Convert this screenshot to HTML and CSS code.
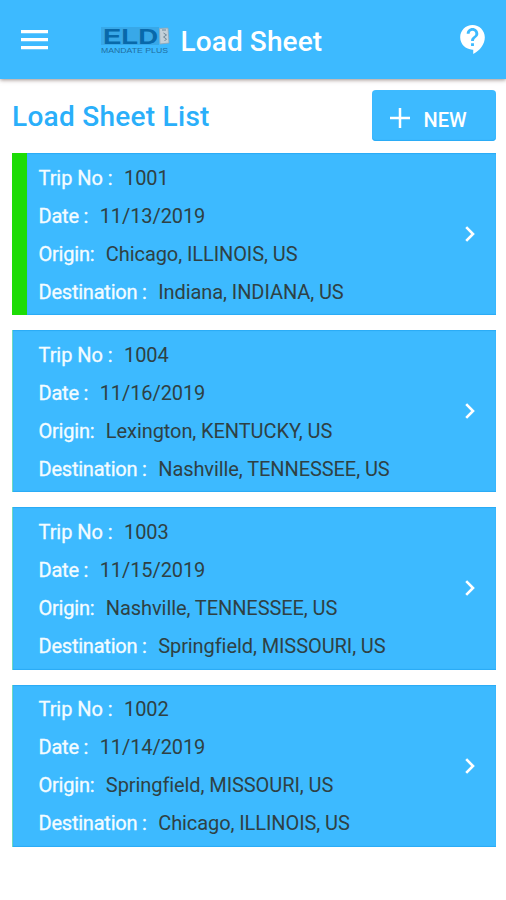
FILE: index.html
```html
<!DOCTYPE html>
<html lang="en">
<head>
<meta charset="utf-8">
<title>Load Sheet</title>
<link rel="stylesheet" href="styles.css">
</head>
<body>
<header class="bar">
  <svg class="menu" viewBox="0 0 27 20"><path d="M0 0h27v3.2H0zM0 8h27v3.2H0zM0 16h27v3.2H0z"/></svg>
  <svg class="logo" viewBox="0 0 69 28">
    <path fill="#38a8e8" d="M0 0h58v18H0z"/>
    <text class="logo-name" x="2" y="17" textLength="55" lengthAdjust="spacingAndGlyphs">ELD</text>
    <path fill="#c3d0d8" stroke="#8fa6b5" stroke-width=".8" d="M58.500 1.500l8.500-.5 1 15-9 1z"/>
    <path fill="none" stroke="#6d8798" d="M61 3h4M62.500 6l3 2-3 2 3 2-2 2"/>
    <text class="logo-sub" x="0" y="26" textLength="67" lengthAdjust="spacingAndGlyphs">MANDATE PLUS</text>
  </svg>
  <h1 class="title">Load Sheet</h1>
  <svg class="help" viewBox="3 2 17 20"><path d="M11.5 2C6.81 2 3 5.81 3 10.5S6.81 19 11.5 19h.5v3c4.86-2.34 8-7 8-11.5C20 5.81 16.190 2 11.5 2zm1 14.5h-2v-2h2v2zm0-3.5h-2c0-3.250 3-3 3-5 0-1.100-.9-2-2-2s-2 .9-2 2h-2c0-2.210 1.790-4 4-4s4 1.790 4 4c0 2.500-3 2.750-3 5z"/></svg>
</header>
<main class="content">
  <div class="heading">
    <h2 class="subtitle">Load Sheet List</h2>
    <button class="new"><svg class="plus" viewBox="0 0 20 20"><path d="M10 0v20M0 10h20"/></svg><span>NEW</span></button>
  </div>
  <section class="list">
    <article class="card active">
      <dl class="rows">
        <div class="row"><dt class="trip">Trip No :</dt><dd>1001</dd></div>
        <div class="row"><dt>Date :</dt><dd>11/13/2019</dd></div>
        <div class="row"><dt>Origin:</dt><dd>Chicago, ILLINOIS, US</dd></div>
        <div class="row"><dt>Destination :</dt><dd>Indiana, INDIANA, US</dd></div>
      </dl>
      <svg class="chevron" viewBox="0 0 10 16"><path d="M1.200 1.200L8 8l-6.800 6.800"/></svg>
    </article>
    <article class="card">
      <dl class="rows">
        <div class="row"><dt class="trip">Trip No :</dt><dd>1004</dd></div>
        <div class="row"><dt>Date :</dt><dd>11/16/2019</dd></div>
        <div class="row"><dt>Origin:</dt><dd>Lexington, KENTUCKY, US</dd></div>
        <div class="row"><dt>Destination :</dt><dd>Nashville, TENNESSEE, US</dd></div>
      </dl>
      <svg class="chevron" viewBox="0 0 10 16"><path d="M1.200 1.200L8 8l-6.800 6.800"/></svg>
    </article>
    <article class="card">
      <dl class="rows">
        <div class="row"><dt class="trip">Trip No :</dt><dd>1003</dd></div>
        <div class="row"><dt>Date :</dt><dd>11/15/2019</dd></div>
        <div class="row"><dt>Origin:</dt><dd>Nashville, TENNESSEE, US</dd></div>
        <div class="row"><dt>Destination :</dt><dd>Springfield, MISSOURI, US</dd></div>
      </dl>
      <svg class="chevron" viewBox="0 0 10 16"><path d="M1.200 1.200L8 8l-6.800 6.800"/></svg>
    </article>
    <article class="card">
      <dl class="rows">
        <div class="row"><dt class="trip">Trip No :</dt><dd>1002</dd></div>
        <div class="row"><dt>Date :</dt><dd>11/14/2019</dd></div>
        <div class="row"><dt>Origin:</dt><dd>Springfield, MISSOURI, US</dd></div>
        <div class="row"><dt>Destination :</dt><dd>Chicago, ILLINOIS, US</dd></div>
      </dl>
      <svg class="chevron" viewBox="0 0 10 16"><path d="M1.200 1.200L8 8l-6.800 6.800"/></svg>
    </article>
  </section>
</main>
</body>
</html>
```
FILE: styles.css
```css
* { box-sizing: border-box; }
body { margin: 0; background: #fff; font-family: Roboto, "Liberation Sans", sans-serif; }
h1, h2, dl, dd { margin: 0; }
svg { display: block; flex: none; }

.bar {
  display: flex;
  align-items: center;
  height: 79px;
  padding: 0 21px;
  background: #3dbaff;
  box-shadow: 0 1px 4px rgba(60, 30, 20, .5);
}
.menu { width: 27px; height: 20px; fill: #fff; }
.logo { width: 69px; height: 28px; margin: 2px 0 0 53px; }
.logo-name { font: 700 21.500px "Liberation Sans", sans-serif; fill: #0869aa; }
.logo-sub { font: 400 8px "Liberation Sans", sans-serif; fill: #216f9f; }
.title { margin: 4px 0 0 10.500px; font-size: 28px; line-height: 34px; font-weight: 500; letter-spacing: .1px; color: #fff; }
.help { width: 25px; height: 29px; margin: 0 0 0 auto; fill: #fff; }

.content { padding: 11px 10.500px 0 12px; }
.heading { display: flex; justify-content: space-between; height: 63px; }
.subtitle { margin-top: 10px; font-size: 28px; line-height: 34px; font-weight: 500; letter-spacing: .27px; color: #2aaffa; }
.new {
  display: flex;
  align-items: center;
  gap: 14px;
  width: 124px;
  height: 51px;
  padding: 6px 0 0 18px;
  border: 0;
  border-radius: 4px;
  background: #3dbaff;
  box-shadow: inset 0 -1px 1px #2aabf5;
  color: #fff;
  font: 500 20px/24px Roboto, sans-serif;
}
.new span { margin-top: 2px; }
.plus { width: 20px; height: 20px; margin-top: -1px; fill: none; stroke: #fff; stroke-width: 2.500; }

.list { display: grid; gap: 15px; }
.card {
  display: flex;
  justify-content: space-between;
  align-items: center;
  height: 162.200px;
  padding: 0 20.500px 0 25.500px;
  border-left: 1px solid #6fd9c0;
  background: #3dbaff;
  box-shadow: inset 0 1px 1px #2aabf5, inset 0 -1px 1px #2aabf5;
}
.active { border-left: 15px solid #1ddc06; padding-left: 11.500px; }
.rows { margin-top: 1px; }
.row { display: flex; gap: 11.500px; height: 38px; align-items: center; font-size: 20px; line-height: 24px; white-space: nowrap; }
.row dt { color: #f4fcff; letter-spacing: -.22px; -webkit-text-stroke: .3px #f4fcff; }
.row .trip { letter-spacing: -.06px; }
.row dd { color: #2f4144; letter-spacing: -.08px; }
.chevron { width: 10px; height: 16px; fill: none; stroke: #fff; stroke-width: 2.600; }
```
